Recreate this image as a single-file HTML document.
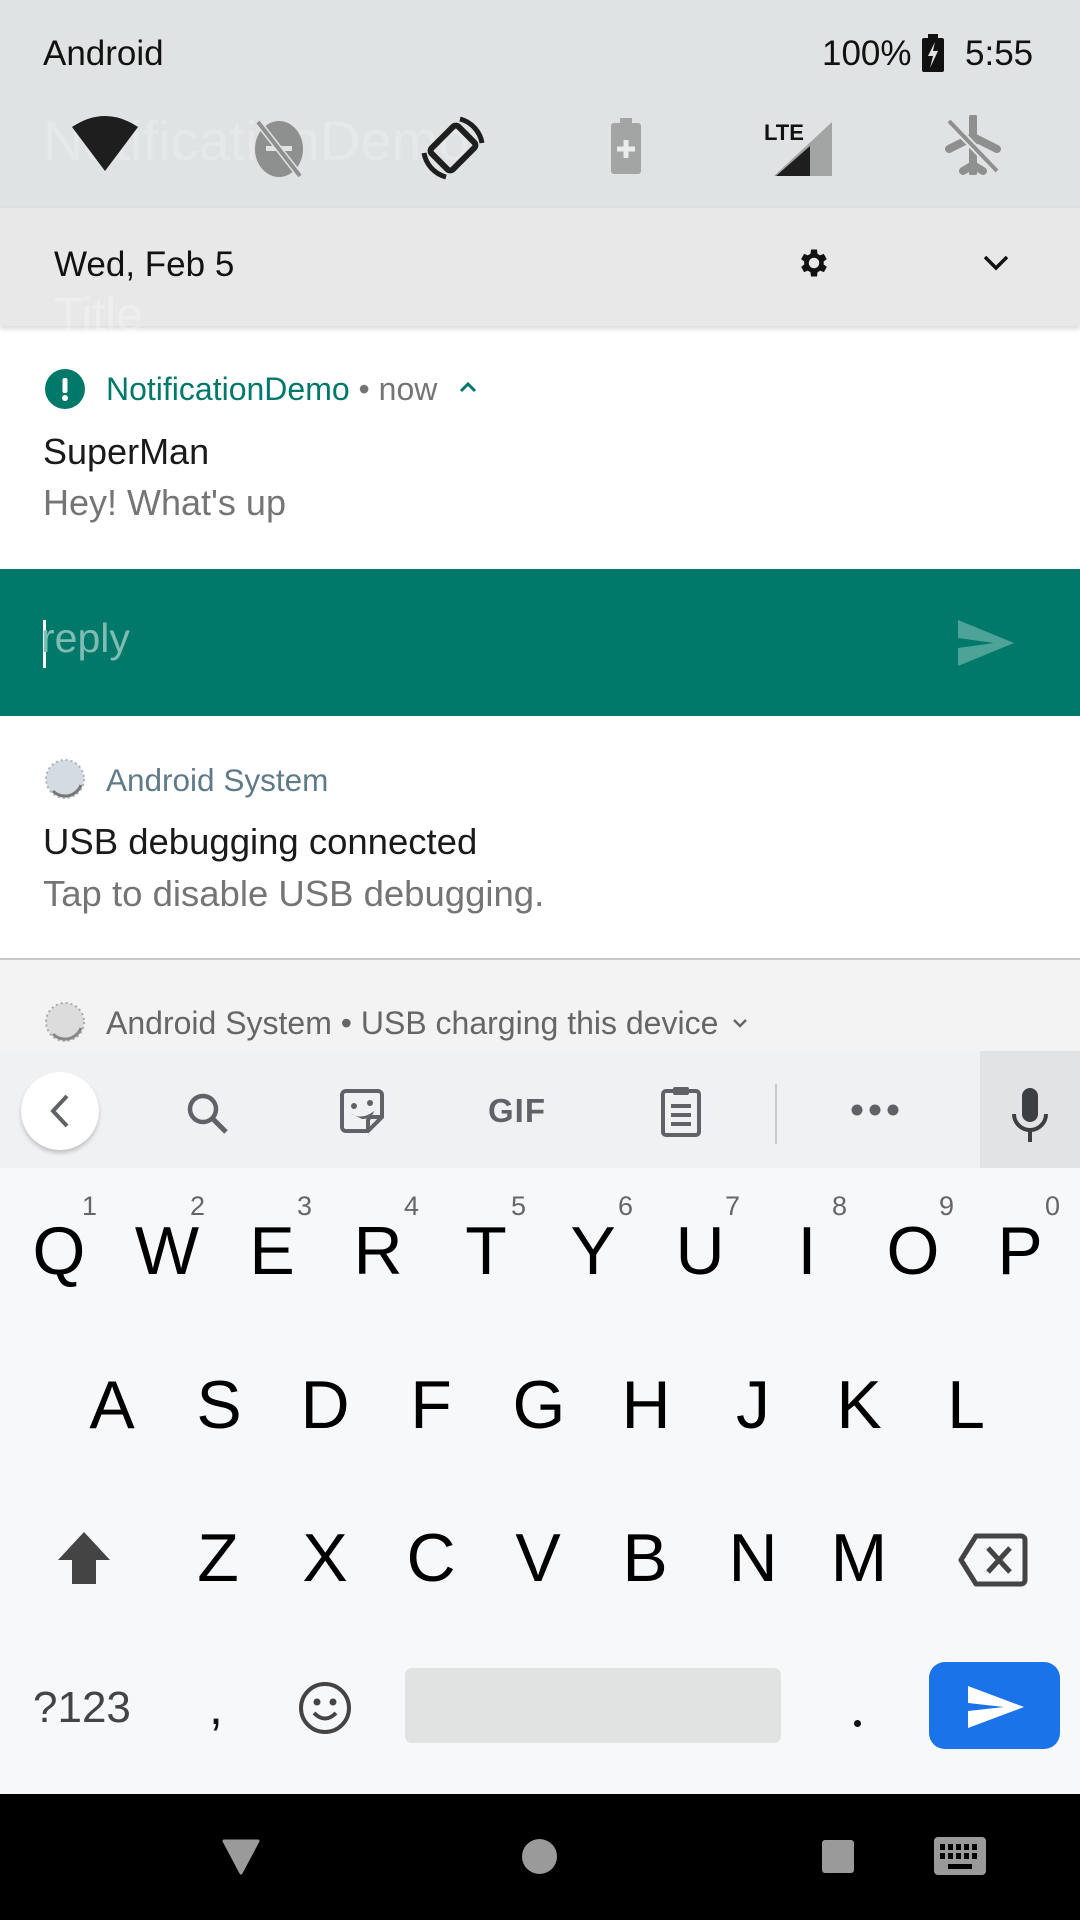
<!DOCTYPE html>
<html><head><meta charset="utf-8"><style>
*{margin:0;padding:0;box-sizing:border-box}
body{width:1080px;height:1920px;position:relative;overflow:hidden;font-family:"Liberation Sans",sans-serif;background:#fff}
.a{position:absolute;white-space:nowrap}
.k{position:absolute;font-size:68px;color:#000;width:100px;text-align:center;line-height:1}
.n{position:absolute;font-size:27px;color:#666;line-height:1}
</style></head><body>
<!-- status + QS -->
<div class="a" style="left:0;top:0;width:1080px;height:208px;background:#dfe3e3"></div>
<div class="a" style="left:43px;top:108px;font-size:56px;color:rgba(255,255,255,.22)">NotificationDemo</div>
<div class="a" style="left:43px;top:34px;font-size:35px;color:#111">Android</div>
<div class="a" style="left:822px;top:34px;font-size:35px;color:#111">100%</div>
<svg class="a" style="left:922px;top:34px" width="22" height="38" viewBox="0 0 22 38"><rect x="6" y="0" width="10" height="4" fill="#111"/><rect x="0" y="4" width="22" height="34" rx="2" fill="#111"/><path d="M13 8 L6 22 H11 L8 34 L16 17 H11 Z" fill="#dfe3e3"/></svg>
<div class="a" style="left:965px;top:34px;font-size:35px;color:#111">5:55</div>
<!-- QS icons -->
<svg class="a" style="left:70px;top:115px" width="70" height="60" viewBox="0 0 70 60"><path d="M2 12 Q35 -10 68 12 L35 56 Z" fill="#1e1e1e"/></svg>
<svg class="a" style="left:248px;top:118px" width="62" height="62" viewBox="0 0 62 62"><ellipse cx="31" cy="31" rx="24" ry="28" fill="#8e9090"/><rect x="18" y="28" width="26" height="5" fill="#dfe3e3"/><line x1="10" y1="4" x2="52" y2="58" stroke="#dfe3e3" stroke-width="7"/><line x1="10" y1="4" x2="52" y2="58" stroke="#8e9090" stroke-width="4"/></svg>
<svg class="a" style="left:420px;top:115px" width="66" height="66" viewBox="0 0 66 66"><rect x="18" y="14" width="30" height="38" rx="4" transform="rotate(45 33 33)" fill="none" stroke="#1e1e1e" stroke-width="6"/><path d="M40 4 A30 30 0 0 1 62 28" fill="none" stroke="#1e1e1e" stroke-width="5"/><path d="M26 62 A30 30 0 0 1 4 38" fill="none" stroke="#1e1e1e" stroke-width="5"/></svg>
<svg class="a" style="left:610px;top:118px" width="32" height="56" viewBox="0 0 32 56"><rect x="10" y="0" width="12" height="6" fill="#a3a5a5"/><rect x="1" y="5" width="30" height="51" rx="3" fill="#a3a5a5"/><path d="M16 22 V40 M7 31 H25" stroke="#e8ecec" stroke-width="5"/></svg>
<svg class="a" style="left:764px;top:118px" width="70" height="60" viewBox="0 0 70 60"><text x="0" y="22" font-family="Liberation Sans" font-size="22" font-weight="bold" fill="#111">LTE</text><path d="M68 4 V58 H10 Z" fill="#a3a5a5"/><path d="M46 28 V58 H12 Z" fill="#1e1e1e"/></svg>
<svg class="a" style="left:945px;top:115px" width="56" height="60" viewBox="0 0 56 60"><path d="M28 2 V58 M4 34 L28 22 L52 34 M18 56 L28 50 L38 56" stroke="#8e9090" stroke-width="8" fill="none" stroke-linecap="round"/><line x1="4" y1="6" x2="52" y2="56" stroke="#dfe3e3" stroke-width="8"/><line x1="4" y1="6" x2="52" y2="56" stroke="#8e9090" stroke-width="4"/></svg>
<!-- date row -->
<div class="a" style="left:0;top:208px;width:1080px;height:118px;background:#e8e8e8;box-shadow:0 3px 5px rgba(0,0,0,.15)"></div>
<div class="a" style="left:54px;top:288px;font-size:48px;color:rgba(255,255,255,.25)">Title</div>
<div class="a" style="left:54px;top:245px;font-size:35px;color:#111">Wed, Feb 5</div>
<svg class="a" style="left:796px;top:245px" width="36" height="36" viewBox="0 0 24 24"><path fill="#111" d="M19.4 13a7.5 7.5 0 000-2l2.1-1.6-2-3.5-2.5 1a7 7 0 00-1.7-1L15 3h-4l-.4 2.9a7 7 0 00-1.7 1l-2.5-1-2 3.5L6.5 11a7.5 7.5 0 000 2l-2.1 1.6 2 3.5 2.5-1a7 7 0 001.7 1L11 21h4l.4-2.9a7 7 0 001.7-1l2.5 1 2-3.5zM13 15.5a3.5 3.5 0 110-7 3.5 3.5 0 010 7z" transform="translate(-1 0)"/></svg>
<svg class="a" style="left:982px;top:254px" width="28" height="18" viewBox="0 0 28 18"><path d="M3 3 L14 14 L25 3" fill="none" stroke="#111" stroke-width="3.5"/></svg>
<!-- notification 1 -->
<svg class="a" style="left:45px;top:369px" width="40" height="40"><circle cx="20" cy="20" r="20" fill="#00796b"/><rect x="17.5" y="9" width="5" height="15" rx="2" fill="#fff"/><circle cx="20" cy="29" r="3" fill="#fff"/></svg>
<div class="a" style="left:106px;top:371px;font-size:32px;color:#00796b">NotificationDemo <span style="color:#757575">• now</span></div>
<svg class="a" style="left:458px;top:380px" width="20" height="14"><path d="M3 11 L10 4 L17 11" fill="none" stroke="#00796b" stroke-width="3"/></svg>
<div class="a" style="left:43px;top:431px;font-size:36px;color:#1a1a1a">SuperMan</div>
<div class="a" style="left:43px;top:482px;font-size:36px;color:#757575">Hey! What's up</div>
<!-- reply bar -->
<div class="a" style="left:0;top:569px;width:1080px;height:147px;background:#00796b"></div>
<div class="a" style="left:43px;top:620px;width:3px;height:48px;background:#fff"></div>
<div class="a" style="left:41px;top:615px;font-size:41px;color:#80bcb4">reply</div>
<svg class="a" style="left:958px;top:620px" width="56" height="46"><path d="M0 0 L56 23 L0 46 L0 28 L36 23 L0 18 Z" fill="#4ea398"/></svg>
<!-- notification 2 -->
<svg class="a" style="left:45px;top:759px" width="40" height="40"><circle cx="20" cy="20" r="19" fill="#d4dbe2"/><circle cx="20" cy="20" r="19" fill="none" stroke="#a8b2bc" stroke-width="2" stroke-dasharray="2 3"/><path d="M8 32 A17 17 0 0 0 36 26" fill="none" stroke="#777" stroke-width="3"/></svg>
<div class="a" style="left:106px;top:762px;font-size:31.5px;color:#5f7a89">Android System</div>
<div class="a" style="left:43px;top:821px;font-size:36.5px;color:#1a1a1a">USB debugging connected</div>
<div class="a" style="left:43px;top:873px;font-size:36.5px;color:#757575">Tap to disable USB debugging.</div>
<div class="a" style="left:0;top:958px;width:1080px;height:2px;background:#c8c8c8"></div>
<div class="a" style="left:0;top:960px;width:1080px;height:91px;background:#f3f3f3"></div>
<svg class="a" style="left:45px;top:1002px" width="40" height="40"><circle cx="20" cy="20" r="19" fill="#dcdcdc"/><circle cx="20" cy="20" r="19" fill="none" stroke="#aaa" stroke-width="2" stroke-dasharray="2 3"/><path d="M8 32 A17 17 0 0 0 36 26" fill="none" stroke="#888" stroke-width="3"/></svg>
<div class="a" style="left:106px;top:1005px;font-size:32px;color:#666">Android System • USB charging this device</div>
<svg class="a" style="left:731px;top:1016px" width="18" height="14"><path d="M3 4 L9 10 L15 4" fill="none" stroke="#666" stroke-width="2.5"/></svg>
<!-- keyboard toolbar -->
<div class="a" style="left:0;top:1051px;width:1080px;height:117px;background:#f0f1f3"></div>
<div class="a" style="left:980px;top:1051px;width:100px;height:117px;background:#e2e3e5"></div>
<div class="a" style="left:21px;top:1072px;width:78px;height:78px;border-radius:50%;background:#fff;box-shadow:0 3px 4px rgba(0,0,0,.2)"></div>
<svg class="a" style="left:48px;top:1093px" width="24" height="36"><path d="M19 3 L5 18 L19 33" fill="none" stroke="#5f6368" stroke-width="4"/></svg>
<svg class="a" style="left:184px;top:1090px" width="48" height="48"><circle cx="19" cy="19" r="13" fill="none" stroke="#5f6368" stroke-width="4.5"/><path d="M28 28 L42 42" stroke="#5f6368" stroke-width="5"/></svg>
<svg class="a" style="left:340px;top:1089px" width="44" height="44" viewBox="0 0 44 44"><path d="M6 2 H38 A4 4 0 0 1 42 6 V28 L28 42 H6 A4 4 0 0 1 2 38 V6 A4 4 0 0 1 6 2 Z" fill="none" stroke="#5f6368" stroke-width="4"/><path d="M28 42 V32 A4 4 0 0 1 32 28 H42" fill="none" stroke="#5f6368" stroke-width="4"/><circle cx="14" cy="17" r="3" fill="#5f6368"/><circle cx="30" cy="14" r="3" fill="#5f6368"/><path d="M10 24 Q22 32 34 22 Q32 30 22 30 Z" fill="#5f6368"/></svg>
<div class="a" style="left:488px;top:1092px;font-size:33px;font-weight:bold;color:#5f6368;letter-spacing:1px">GIF</div>
<svg class="a" style="left:660px;top:1085px" width="42" height="52" viewBox="0 0 42 52"><rect x="3" y="6" width="36" height="44" rx="3" fill="none" stroke="#5f6368" stroke-width="4"/><rect x="13" y="2" width="16" height="8" rx="2" fill="#5f6368"/><path d="M11 21 H31 M11 30 H31 M11 39 H31" stroke="#5f6368" stroke-width="4"/></svg>
<div class="a" style="left:775px;top:1084px;width:2px;height:60px;background:#c8c9cb"></div>
<svg class="a" style="left:850px;top:1103px" width="50" height="14"><circle cx="7" cy="7" r="5.5" fill="#5f6368"/><circle cx="25" cy="7" r="5.5" fill="#5f6368"/><circle cx="43" cy="7" r="5.5" fill="#5f6368"/></svg>
<svg class="a" style="left:1010px;top:1088px" width="40" height="56" viewBox="0 0 40 56"><rect x="12" y="0" width="16" height="34" rx="8" fill="#3c4043"/><path d="M4 26 A16 16 0 0 0 36 26" fill="none" stroke="#3c4043" stroke-width="4"/><path d="M20 42 V54" stroke="#3c4043" stroke-width="4"/></svg>
<!-- keys -->
<div class="a" style="left:0;top:1168px;width:1080px;height:626px;background:#f7f8fa"></div>
<div class="k" style="left:9px;top:1217px">Q</div><div class="k" style="left:117px;top:1217px">W</div><div class="k" style="left:222px;top:1217px">E</div><div class="k" style="left:328px;top:1217px">R</div><div class="k" style="left:436px;top:1217px">T</div><div class="k" style="left:543px;top:1217px">Y</div><div class="k" style="left:650px;top:1217px">U</div><div class="k" style="left:757px;top:1217px">I</div><div class="k" style="left:863px;top:1217px">O</div><div class="k" style="left:970px;top:1217px">P</div>
<div class="n" style="left:82px;top:1193px">1</div><div class="n" style="left:190px;top:1193px">2</div><div class="n" style="left:297px;top:1193px">3</div><div class="n" style="left:404px;top:1193px">4</div><div class="n" style="left:511px;top:1193px">5</div><div class="n" style="left:618px;top:1193px">6</div><div class="n" style="left:725px;top:1193px">7</div><div class="n" style="left:832px;top:1193px">8</div><div class="n" style="left:939px;top:1193px">9</div><div class="n" style="left:1045px;top:1193px">0</div>
<div class="k" style="left:62px;top:1371px">A</div><div class="k" style="left:169px;top:1371px">S</div><div class="k" style="left:275px;top:1371px">D</div><div class="k" style="left:381px;top:1371px">F</div><div class="k" style="left:489px;top:1371px">G</div><div class="k" style="left:596px;top:1371px">H</div><div class="k" style="left:703px;top:1371px">J</div><div class="k" style="left:809px;top:1371px">K</div><div class="k" style="left:916px;top:1371px">L</div>
<svg class="a" style="left:56px;top:1530px" width="56" height="56" viewBox="0 0 56 56"><path d="M28 2 L54 30 H40 V54 H16 V30 H2 Z" fill="#444"/></svg>
<div class="k" style="left:168px;top:1524px">Z</div><div class="k" style="left:275px;top:1524px">X</div><div class="k" style="left:381px;top:1524px">C</div><div class="k" style="left:488px;top:1524px">V</div><div class="k" style="left:595px;top:1524px">B</div><div class="k" style="left:703px;top:1524px">N</div><div class="k" style="left:809px;top:1524px">M</div>
<svg class="a" style="left:958px;top:1533px" width="70" height="54" viewBox="0 0 70 54"><path d="M18 3 H63 A4 4 0 0 1 67 7 V47 A4 4 0 0 1 63 51 H18 L3 27 Z" fill="none" stroke="#444" stroke-width="5" stroke-linejoin="round"/><path d="M30 15 L52 39 M52 15 L30 39" stroke="#444" stroke-width="5"/></svg>
<div class="a" style="left:33px;top:1683px;font-size:44px;color:#444">?123</div>
<div class="a" style="left:209px;top:1678px;font-size:50px;color:#111">,</div>
<svg class="a" style="left:297px;top:1680px" width="56" height="56"><circle cx="28" cy="28" r="24" fill="none" stroke="#444" stroke-width="4"/><circle cx="20" cy="22" r="3.5" fill="#444"/><circle cx="36" cy="22" r="3.5" fill="#444"/><path d="M17 33 Q28 44 39 33" fill="none" stroke="#444" stroke-width="4"/></svg>
<div class="a" style="left:405px;top:1668px;width:376px;height:75px;border-radius:7px;background:#e1e2e2"></div>
<div class="a" style="left:854px;top:1720px;width:7px;height:7px;border-radius:50%;background:#111"></div>
<div class="a" style="left:929px;top:1662px;width:131px;height:87px;border-radius:16px;background:#1a73e8"></div>
<svg class="a" style="left:968px;top:1686px" width="56" height="42"><path d="M0 0 L56 21 L0 42 L0 25 L36 21 L0 17 Z" fill="#fff"/></svg>
<!-- nav -->
<div class="a" style="left:0;top:1794px;width:1080px;height:126px;background:#000"></div>
<svg class="a" style="left:222px;top:1837px" width="38" height="38"><path d="M2 4 L36 4 L19 36 Z" fill="#9a9a9a" stroke="#9a9a9a" stroke-width="3" stroke-linejoin="round"/></svg>
<div class="a" style="left:522px;top:1839px;width:35px;height:35px;border-radius:50%;background:#9a9a9a"></div>
<div class="a" style="left:822px;top:1840px;width:32px;height:33px;border-radius:3px;background:#9a9a9a"></div>
<svg class="a" style="left:934px;top:1837px" width="52" height="38" viewBox="0 0 52 38"><rect x="0" y="0" width="52" height="38" rx="4" fill="#9a9a9a"/><g fill="#000"><rect x="6" y="7" width="5" height="6"/><rect x="14" y="7" width="5" height="6"/><rect x="22" y="7" width="5" height="6"/><rect x="30" y="7" width="5" height="6"/><rect x="38" y="7" width="5" height="6"/><rect x="6" y="16" width="5" height="6"/><rect x="14" y="16" width="5" height="6"/><rect x="22" y="16" width="5" height="6"/><rect x="30" y="16" width="5" height="6"/><rect x="38" y="16" width="5" height="6"/><rect x="14" y="27" width="24" height="5"/></g></svg>
</body></html>
